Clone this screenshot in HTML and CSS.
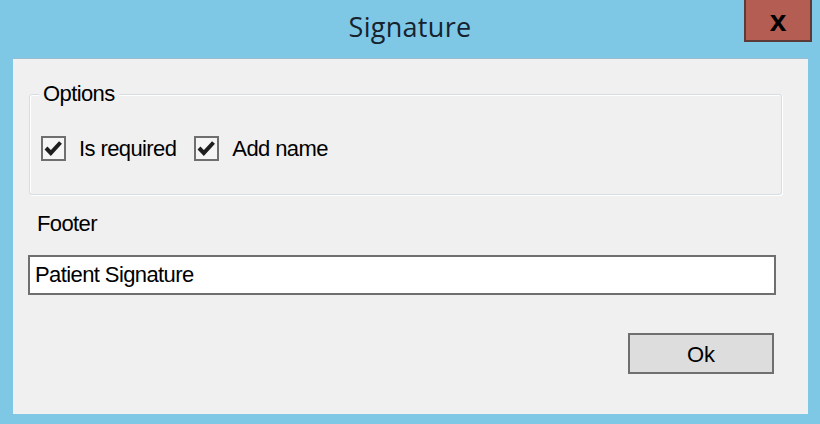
FILE: index.html
```html
<!DOCTYPE html>
<html lang="en">
<head>
<meta charset="utf-8">
<title>Signature</title>
<link rel="stylesheet" href="styles.css">
</head>
<body>
<div class="window">
  <div class="titlebar">
    <div class="spacer"></div>
    <div class="title">Signature</div>
    <div class="controls"><button class="close" type="button">x</button></div>
  </div>
  <div class="client">
    <fieldset class="group">
      <legend class="group-legend">Options</legend>
      <div class="checks">
        <label class="check">
          <span class="box"><svg class="tick" viewBox="0 0 21 21" width="21" height="21"><path d="M3 10 L7.8 15 L17.5 4.5" fill="none" stroke="#1e1e1e" stroke-width="4" stroke-linecap="butt" stroke-linejoin="miter"/></svg></span>
          <span class="check-text">Is required</span>
        </label>
        <label class="check">
          <span class="box"><svg class="tick" viewBox="0 0 21 21" width="21" height="21"><path d="M3 10 L7.8 15 L17.5 4.5" fill="none" stroke="#1e1e1e" stroke-width="4" stroke-linecap="butt" stroke-linejoin="miter"/></svg></span>
          <span class="check-text">Add name</span>
        </label>
      </div>
    </fieldset>
    <div class="field-label">Footer</div>
    <div class="textbox">Patient Signature</div>
    <div class="actions"><button class="btn" type="button">Ok</button></div>
  </div>
</div>
</body>
</html>
```
FILE: styles.css
```css
html, body {
  margin: 0;
  padding: 0;
}

body {
  width: 820px;
  height: 424px;
  overflow: hidden;
  background: #7ec8e6;
  font-family: "Liberation Sans", Arial, sans-serif;
  font-size: 22px;
  letter-spacing: -0.6px;
  color: #000;
}

.window {
  display: flex;
  flex-direction: column;
  height: 424px;
}

.titlebar {
  display: grid;
  grid-template-columns: 1fr auto 1fr;
  align-items: start;
  height: 58px;
}

.title {
  padding-top: 9px;
  font-family: "Open Sans", sans-serif;
  font-size: 27px;
  line-height: 36px;
  letter-spacing: 0.3px;
  color: #16222e;
}

.controls {
  display: flex;
  justify-content: flex-end;
  padding-right: 8px;
}

.close {
  box-sizing: border-box;
  width: 68px;
  height: 42px;
  margin: 0;
  padding: 2px 0 0 0;
  background: #b45d53;
  border: 2px solid #5c3b37;
  border-top: 0;
  font-family: "Liberation Sans", Arial, sans-serif;
  font-weight: bold;
  font-size: 30px;
  line-height: 30px;
  letter-spacing: 0;
  color: #000;
  text-align: center;
  display: block;
}

.client {
  margin: 0 12px 0 13px;
  height: 355px;
  background: #f0f0f0;
  border-top: 1px solid #9bbbd0;
  display: flex;
  flex-direction: column;
}

.group {
  margin: 21px 26px 0 16px;
  padding: 28px 10px 33px 11px;
  border: 1px solid #d5dde5;
  border-radius: 3px;
  box-shadow: inset 1px 1px 0 #fff, 1px 1px 0 #fff;
  min-width: 0;
}

.group-legend {
  margin-left: -2px;
  padding: 0 4px;
  line-height: 28px;
  background: #f0f0f0;
}

.checks {
  display: flex;
  align-items: center;
  gap: 18px;
  height: 25px;
}

.check {
  display: flex;
  align-items: center;
  gap: 13px;
  line-height: 25px;
}

.box {
  box-sizing: border-box;
  width: 25px;
  height: 25px;
  border: 2px solid #6f6f6f;
  background: #f5f5f5;
  display: flex;
  align-items: center;
  justify-content: center;
}

.tick {
  display: block;
}

.field-label {
  margin: 15px 0 0 24px;
  line-height: 28px;
}

.textbox {
  box-sizing: border-box;
  margin: 17px 32px 0 15px;
  height: 40px;
  padding: 0 5px;
  border: 2px solid #6f6f6f;
  background: #fff;
  line-height: 36px;
  white-space: nowrap;
}

.actions {
  display: flex;
  justify-content: flex-end;
  margin: 38px 34px 0 0;
}

.btn {
  box-sizing: border-box;
  width: 146px;
  height: 41px;
  margin: 0;
  padding: 0;
  border: 2px solid #6f6f6f;
  background: #dddddd;
  font: inherit;
  line-height: 39px;
  color: #000;
  text-align: center;
}
```
